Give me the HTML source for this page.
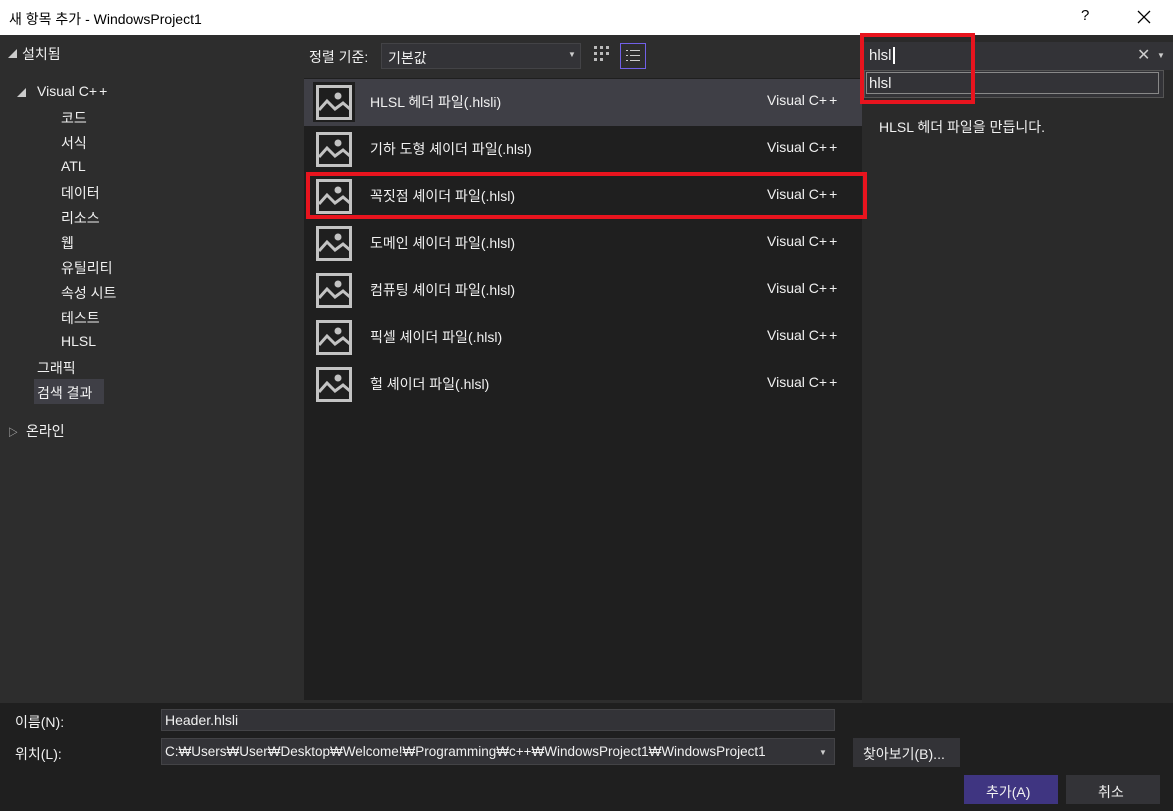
<!DOCTYPE html><html><head><meta charset="utf-8"><style>
*{margin:0;padding:0;box-sizing:border-box}
body{width:1173px;height:811px;overflow:hidden;background:#2d2d2d;font-family:"Liberation Sans","Noto Sans CJK KR",sans-serif;color:#f1f1f1;font-size:14px;position:relative}
.a{position:absolute;white-space:nowrap}
.title{left:0;top:0;width:1173px;height:35px;background:#fff;color:#000}
.list{left:304px;top:78px;width:558px;height:622px;background:#1f1f1f}
.row{position:absolute;left:0;width:558px;height:47px}
.row .ic{position:absolute;left:9px;top:3px}
.row .n{position:absolute;left:66px;top:13px}
.row .v{position:absolute;left:463px;top:13px}
.row .v b{font-weight:normal;letter-spacing:2px}
.bot{left:0;top:703px;width:1173px;height:108px;background:#1f1f1f}
.inp{background:#333337;border:1px solid #434346}
</style></head><body>
<div class="a title"><span class="a" style="left:9px;top:9px;font-size:14px">새 항목 추가 - WindowsProject1</span><span class="a" style="left:1081px;top:7px;font-size:15px">?</span><svg class="a" style="left:1137px;top:10px" width="14" height="14"><path d="M1 1L13 13M13 1L1 13" stroke="#000" stroke-width="1.3"/></svg></div>
<span class="a" style="left:8px;top:47px;font-size:9px;color:#ccc">◢</span><span class="a" style="left:22px;top:44px">설치됨</span>
<span class="a" style="left:17px;top:86px;font-size:9px;color:#ccc">◢</span><span class="a" style="left:37px;top:83px">Visual C<span style="letter-spacing:2px">++</span></span>
<span class="a" style="left:61px;top:108px">코드</span>
<span class="a" style="left:61px;top:133px">서식</span>
<span class="a" style="left:61px;top:158px">ATL</span>
<span class="a" style="left:61px;top:183px">데이터</span>
<span class="a" style="left:61px;top:208px">리소스</span>
<span class="a" style="left:61px;top:233px">웹</span>
<span class="a" style="left:61px;top:258px">유틸리티</span>
<span class="a" style="left:61px;top:283px">속성 시트</span>
<span class="a" style="left:61px;top:308px">테스트</span>
<span class="a" style="left:61px;top:333px">HLSL</span>
<span class="a" style="left:37px;top:358px">그래픽</span>
<div class="a" style="left:34px;top:379px;width:70px;height:25px;background:#3f3f46"></div><span class="a" style="left:37px;top:383px">검색 결과</span>
<span class="a" style="left:8px;top:424px;font-size:10px;color:#ccc">▷</span><span class="a" style="left:26px;top:421px">온라인</span>
<span class="a" style="left:309px;top:47px">정렬 기준:</span>
<div class="a inp" style="left:381px;top:43px;width:200px;height:26px"><span class="a" style="left:6px;top:4px">기본값</span><span class="a" style="left:186px;top:6px;font-size:8px;color:#ccc">▼</span></div>
<svg class="a" style="left:593px;top:45px" width="18" height="20"><g fill="#bbb"><rect x="1" y="1" width="3" height="3"/><rect x="7" y="1" width="3" height="3"/><rect x="13" y="1" width="3" height="3"/><rect x="1" y="7" width="3" height="3"/><rect x="7" y="7" width="3" height="3"/><rect x="13" y="7" width="3" height="3"/><rect x="1" y="13" width="3" height="3"/><rect x="7" y="13" width="3" height="3"/></g></svg>
<div class="a" style="left:620px;top:43px;width:26px;height:26px;border:1px solid #7160e8"></div>
<svg class="a" style="left:625px;top:48px" width="16" height="16"><g fill="#ccc"><rect x="1" y="2" width="2" height="1"/><rect x="5" y="2" width="10" height="1"/><rect x="1" y="7" width="2" height="1"/><rect x="5" y="7" width="10" height="1"/><rect x="1" y="12" width="2" height="1"/><rect x="5" y="12" width="10" height="1"/></g></svg>
<div class="a list">
<div class="row" style="top:1px;background:#3f3f46"></div>
<div class="row" style="top:1px"><svg class="ic" width="42" height="40"><rect x="0" y="0" width="42" height="40" fill="#1e1e1e"/><rect x="4.5" y="4.5" width="33" height="32" fill="none" stroke="#c3c3c3" stroke-width="3"/><circle cx="25" cy="14" r="3.5" fill="#c3c3c3"/><polyline points="6,28 14,19 22,27 30,21 37,27" fill="none" stroke="#c3c3c3" stroke-width="3"/></svg><span class="n">HLSL 헤더 파일(.hlsli)</span><span class="v">Visual C<b>++</b></span></div>
<div class="row" style="top:48px"><svg class="ic" width="42" height="40"><rect x="4.5" y="4.5" width="33" height="32" fill="none" stroke="#c3c3c3" stroke-width="3"/><circle cx="25" cy="14" r="3.5" fill="#c3c3c3"/><polyline points="6,28 14,19 22,27 30,21 37,27" fill="none" stroke="#c3c3c3" stroke-width="3"/></svg><span class="n">기하 도형 셰이더 파일(.hlsl)</span><span class="v">Visual C<b>++</b></span></div>
<div class="row" style="top:95px"><svg class="ic" width="42" height="40"><rect x="4.5" y="4.5" width="33" height="32" fill="none" stroke="#c3c3c3" stroke-width="3"/><circle cx="25" cy="14" r="3.5" fill="#c3c3c3"/><polyline points="6,28 14,19 22,27 30,21 37,27" fill="none" stroke="#c3c3c3" stroke-width="3"/></svg><span class="n">꼭짓점 셰이더 파일(.hlsl)</span><span class="v">Visual C<b>++</b></span></div>
<div class="row" style="top:142px"><svg class="ic" width="42" height="40"><rect x="4.5" y="4.5" width="33" height="32" fill="none" stroke="#c3c3c3" stroke-width="3"/><circle cx="25" cy="14" r="3.5" fill="#c3c3c3"/><polyline points="6,28 14,19 22,27 30,21 37,27" fill="none" stroke="#c3c3c3" stroke-width="3"/></svg><span class="n">도메인 셰이더 파일(.hlsl)</span><span class="v">Visual C<b>++</b></span></div>
<div class="row" style="top:189px"><svg class="ic" width="42" height="40"><rect x="4.5" y="4.5" width="33" height="32" fill="none" stroke="#c3c3c3" stroke-width="3"/><circle cx="25" cy="14" r="3.5" fill="#c3c3c3"/><polyline points="6,28 14,19 22,27 30,21 37,27" fill="none" stroke="#c3c3c3" stroke-width="3"/></svg><span class="n">컴퓨팅 셰이더 파일(.hlsl)</span><span class="v">Visual C<b>++</b></span></div>
<div class="row" style="top:236px"><svg class="ic" width="42" height="40"><rect x="4.5" y="4.5" width="33" height="32" fill="none" stroke="#c3c3c3" stroke-width="3"/><circle cx="25" cy="14" r="3.5" fill="#c3c3c3"/><polyline points="6,28 14,19 22,27 30,21 37,27" fill="none" stroke="#c3c3c3" stroke-width="3"/></svg><span class="n">픽셀 셰이더 파일(.hlsl)</span><span class="v">Visual C<b>++</b></span></div>
<div class="row" style="top:283px"><svg class="ic" width="42" height="40"><rect x="4.5" y="4.5" width="33" height="32" fill="none" stroke="#c3c3c3" stroke-width="3"/><circle cx="25" cy="14" r="3.5" fill="#c3c3c3"/><polyline points="6,28 14,19 22,27 30,21 37,27" fill="none" stroke="#c3c3c3" stroke-width="3"/></svg><span class="n">헐 셰이더 파일(.hlsl)</span><span class="v">Visual C<b>++</b></span></div>
</div>
<div class="a" style="left:862px;top:35px;width:311px;height:668px;background:#2a2a2a"></div>
<div class="a" style="left:862px;top:42px;width:311px;height:28px;background:#333337"></div>
<span class="a" style="left:869px;top:47px;font-size:15px">hlsl<span style="border-left:2px solid #fff;margin-left:1px"></span></span>
<span class="a" style="left:1137px;top:45px;font-size:16px;color:#ccc">✕</span><span class="a" style="left:1157px;top:51px;font-size:8px;color:#ccc">▼</span>
<div class="a" style="left:864px;top:70px;width:300px;height:28px;background:#333337;border:1px solid #555"></div>
<div class="a" style="left:866px;top:72px;width:293px;height:22px;border:1px solid #888"><span class="a" style="left:2px;top:2px;font-size:15px">hlsl</span></div>
<span class="a" style="left:879px;top:117px">HLSL 헤더 파일을 만듭니다.</span>
<div class="a" style="left:306px;top:172px;width:561px;height:47px;border:4px solid #e8141e"></div>
<div class="a" style="left:860px;top:33px;width:115px;height:71px;border:4px solid #e8141e"></div>
<div class="a bot">
<span class="a" style="left:15px;top:9px">이름(N):</span>
<div class="a inp" style="left:161px;top:6px;width:674px;height:22px"><span class="a" style="left:3px;top:2px">Header.hlsli</span></div>
<span class="a" style="left:15px;top:41px">위치(L):</span>
<div class="a inp" style="left:161px;top:35px;width:674px;height:27px"><span class="a" style="left:3px;top:5px;font-size:13.5px">C:₩Users₩User₩Desktop₩Welcome!₩Programming₩c++₩WindowsProject1₩WindowsProject1</span><span class="a" style="left:657px;top:9px;font-size:8px;color:#ccc">▼</span></div>
<div class="a" style="left:853px;top:35px;width:107px;height:29px;background:#333337"><span class="a" style="left:10px;top:6px">찾아보기(B)...</span></div>
<div class="a" style="left:964px;top:72px;width:94px;height:29px;background:#3f3581"><span class="a" style="left:22px;top:7px">추가(A)</span></div>
<div class="a" style="left:1066px;top:72px;width:94px;height:29px;background:#333337"><span class="a" style="left:32px;top:7px">취소</span></div>
</div>
</body></html>
